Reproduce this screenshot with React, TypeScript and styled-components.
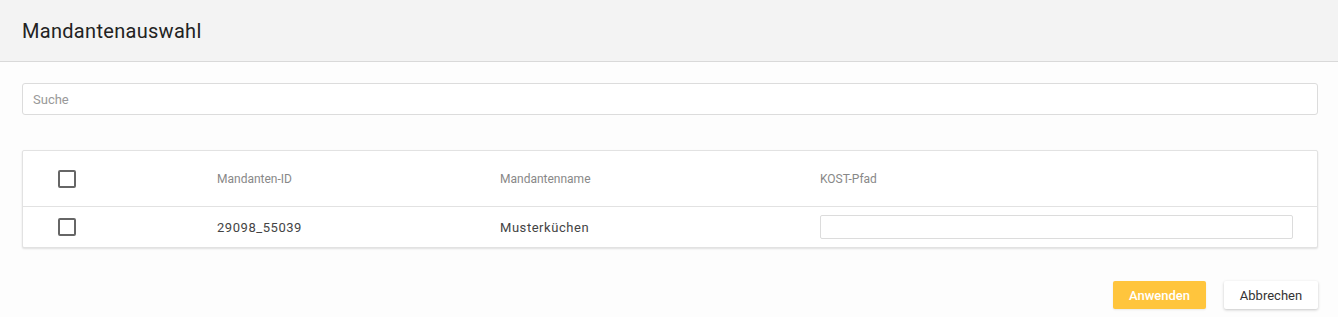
import styled, { createGlobalStyle } from "styled-components";

const GlobalStyle = createGlobalStyle`
  body {
    margin: 0;
    background: #fdfdfd;
    font-family: Roboto, "Liberation Sans", sans-serif;
  }
`;

const Dialog = styled.div`
  width: 1338px;
  height: 317px;
  background: #fdfdfd;
  overflow: hidden;
`;

const Header = styled.header`
  height: 61px;
  background: #f3f3f3;
  border-bottom: 1px solid #d9d9d9;
  display: flex;
  align-items: center;
  padding: 0 22px;
  box-sizing: content-box;
`;

const Title = styled.h1`
  margin: 0;
  font-size: 20px;
  font-weight: 400;
  color: #222;
  letter-spacing: 0.3px;
`;

const Body = styled.div`
  padding: 21px 20px 0 22px;
`;

const Search = styled.input`
  display: block;
  width: 100%;
  height: 32px;
  box-sizing: border-box;
  border: 1px solid #dcdcdc;
  border-radius: 3px;
  background: #fff;
  padding: 0 10px;
  font-family: inherit;
  font-size: 13px;
  color: #333;
  outline: none;
  &::placeholder {
    color: #999;
  }
`;

const Table = styled.div`
  margin-top: 35px;
  border: 1px solid #e2e2e2;
  border-radius: 2px;
  background: #fff;
  box-shadow: 0 1px 2px rgba(0, 0, 0, 0.12);
`;

const Row = styled.div<{ $head?: boolean }>`
  display: grid;
  grid-template-columns: 194px 283px 320px 1fr;
  align-items: center;
  height: ${(p) => (p.$head ? "55px" : "40px")};
  border-bottom: ${(p) => (p.$head ? "1px solid #e2e2e2" : "none")};
`;

const CheckCell = styled.div`
  padding-left: 35px;
  display: flex;
  align-items: center;
`;

const Box = styled.span`
  width: 18px;
  height: 18px;
  box-sizing: border-box;
  border: 2px solid #666;
  border-radius: 2px;
  display: inline-block;
`;

const HeadCell = styled.div`
  font-size: 12px;
  color: #888;
`;

const Cell = styled.div`
  font-size: 13px;
  color: #444;
  letter-spacing: 0.55px;
`;

const PathInput = styled.input`
  display: block;
  width: 473px;
  height: 24px;
  box-sizing: border-box;
  border: 1px solid #dcdcdc;
  border-radius: 2px;
  background: #fff;
  outline: none;
`;

const Footer = styled.div`
  display: flex;
  justify-content: flex-end;
  gap: 18px;
  margin-top: 33px;
`;

const Button = styled.button<{ $primary?: boolean }>`
  height: 28px;
  border-radius: 2px;
  border: none;
  font-family: inherit;
  font-size: 13px;
  cursor: pointer;
  background: ${(p) => (p.$primary ? "#ffc53d" : "#fff")};
  color: ${(p) => (p.$primary ? "#fff" : "#333")};
  font-weight: ${(p) => (p.$primary ? 500 : 400)};
  width: ${(p) => (p.$primary ? "93px" : "94px")};
  box-shadow: ${(p) =>
    p.$primary ? "0 1px 2px rgba(0,0,0,0.08)" : "0 1px 3px rgba(0,0,0,0.22)"};
`;

function App() {
  return (
    <Dialog>
      <GlobalStyle />
      <Header>
        <Title>Mandantenauswahl</Title>
      </Header>
      <Body>
        <Search placeholder="Suche" />
        <Table>
          <Row $head>
            <CheckCell>
              <Box />
            </CheckCell>
            <HeadCell>Mandanten-ID</HeadCell>
            <HeadCell>Mandantenname</HeadCell>
            <HeadCell>KOST-Pfad</HeadCell>
          </Row>
          <Row>
            <CheckCell>
              <Box />
            </CheckCell>
            <Cell>29098_55039</Cell>
            <Cell>Musterküchen</Cell>
            <div>
              <PathInput />
            </div>
          </Row>
        </Table>
        <Footer>
          <Button $primary>Anwenden</Button>
          <Button>Abbrechen</Button>
        </Footer>
      </Body>
    </Dialog>
  );
}

export default App;
